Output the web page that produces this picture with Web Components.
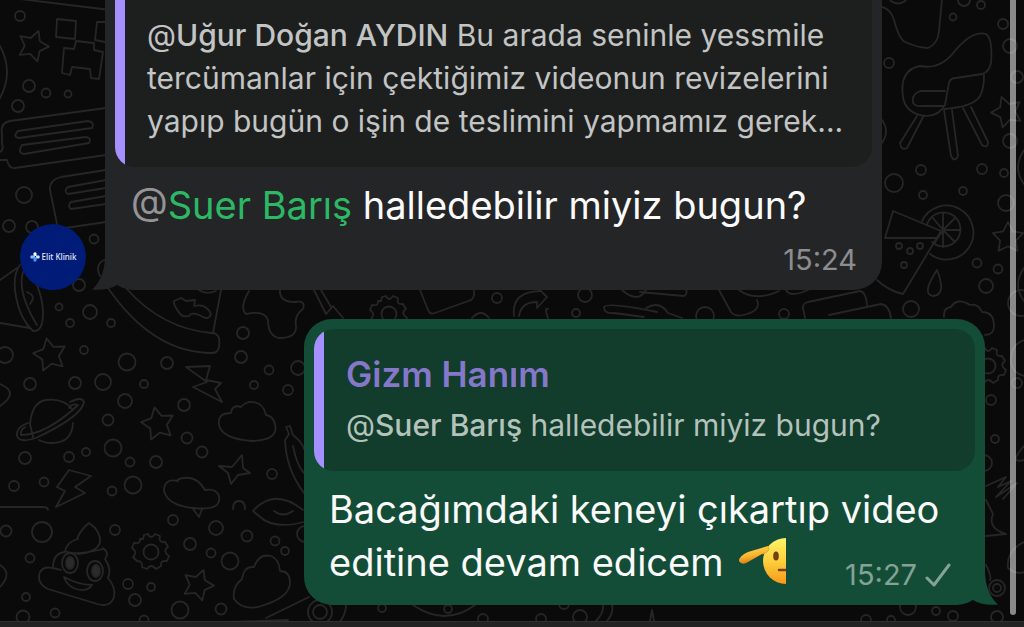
<!DOCTYPE html>
<html lang="tr">
<head>
<meta charset="utf-8">
<title>Sohbet</title>
<style>
html,body{margin:0;height:100%;overflow:hidden;background:#0a0a0a}
body{font-family:Inter,"Noto Sans",sans-serif;color:#fafafa}
</style>
</head>
<body>
<chat-view>
  <chat-message side="in">
    <chat-avatar slot="avatar"></chat-avatar>
    <chat-quote slot="quote">@<b>Uğur Doğan AYDIN</b> Bu arada seninle yessmile<br>tercümanlar için çektiğimiz videonun revizelerini<br>yapıp bugün o işin de teslimini yapmamız gerek...</chat-quote>
    <chat-mention>Suer Barış</chat-mention> halledebilir miyiz bugun?
    <time slot="time">15:24</time>
  </chat-message>
  <chat-message side="out">
    <chat-quote slot="quote" author="Gizm Hanım">@<b>Suer Barış</b> halledebilir miyiz bugun?</chat-quote>
    Bacağımdaki keneyi çıkartıp video<br>editine devam edicem <salute-face></salute-face>
    <time slot="time">15:27</time>
    <sent-check slot="time"></sent-check>
  </chat-message>
</chat-view>
<script>
class Base extends HTMLElement{
  constructor(){super();this.attachShadow({mode:'open'});}
  connectedCallback(){this.shadowRoot.innerHTML=this.render();}
}

/* x, y, radius of the bubbles scattered over the wallpaper */
const DOTS=[[20,16,5],[29,86,6],[46,93,4.5],[68,94,3.5],[18,106,6],[24,195,8],[9,226,6],[32,227,6],[94,239,4.5],[79,285,6],[59,307,3.5],[90,312,7],[70,323,4],[111,323,4],[5,355,8],[84,350,4],[127,362,8.5],[167,363,6],[30,384,6],[75,383,6],[103,382,8],[144,384,4],[125,401,7],[184,405,6],[108,420,5.5],[243,333,6],[241,357,6],[269,370,4.5],[298,368,7],[254,385,4],[288,390,5],
[187,438,5.5],[113,448,8.5],[25,458,6],[69,457,5],[86,452,4],[130,462,4.5],[156,462,6],[202,452,5.5],[14,486,5],[44,482,4.5],[112,491,4.5],[133,485,8.5],[272,474,5],[6,531,5.5],[42,532,10],[115,530,5],[173,520,5],[216,528,7],[190,544,6],[247,536,5.5],[211,553,4.5],[230,561,8.5],[275,541,4.5],[285,551,4],[30,558,4.5],[128,584,5],[151,587,4],[135,600,6],[26,597,4],[55,613,4.5],[23,617,6.5],[180,610,8.5],[221,609,5.5],[144,620,4.5],[305,534,8],
[497,298,5],[585,295,7],[576,313,4],[964,0,6],[981,5,4],[953,17,3.5],[1003,24,5],[1010,46,7],[889,63,5],[1017,77,6],[1010,141,7],[921,170,5],[894,183,9],[982,169,5],[1004,173,4],[923,195,4],[963,191,4],[1006,203,8],[977,263,4.5],[998,269,4.5],[986,286,7],[911,309,8],[784,314,5],[705,316,9],[899,246,3],[910,251,3],[920,246,3],[904,265,3],
[991,400,5],[995,439,4],[984,463,8],[1017,383,5],
[382,608,4],[448,609,4],[483,619,5],[541,619,5],[580,617,7],[564,604,5],[866,620,5],[891,620,4],[908,607,8],[936,611,4],[953,616,5],[997,617,6]];
const STARS=[[33,46,16,20],[50,355,17,-12],[158,424,17,-12],[198,585,16,20],[1007,112,16,-20],[1008,238,16,0]];
const star=([x,y,r,a])=>{let p=[];for(let i=0;i<10;i++){const q=i%2?r*.52:r,t=(a+i*36-90)*Math.PI/180;p.push((x+q*Math.cos(t)).toFixed(1)+' '+(y+q*Math.sin(t)).toFixed(1));}return `M${p.join('L')}Z`;};

class ChatWallpaper extends Base{render(){return `<style>:host{display:block}svg{display:block;width:100%;height:100%}</style>
<svg viewBox="0 0 1024 627" preserveAspectRatio="xMinYMin slice" aria-hidden="true" fill="none" stroke="#262627" stroke-width="1.8" stroke-linejoin="round" stroke-linecap="round">
${DOTS.map(([x,y,r])=>`<circle cx="${x}" cy="${y}" r="${r}"/>`).join('')}
<path d="${STARS.map(star).join('')}"/>
<path d="M20 -1L110 10M0 46Q14 72 0 98"/>
<path d="M57 19l19 2-1 18-19-2zM97 22h12M97 22l-2 18 10 2M76 41l17 2M76 41l-2 8-10-1-2 25 8 2 2-8 18 2 1 9 8 1 4-27-9-2V43"/>
<path d="M106 108L10 121Q0 123 2 134V143Q4 150 0 152M0 160h7q2 9 8 8l91-13M18 131l70-10q7 1 4 7l-73 10q-7-1-1-7zM22 145l64-8q6 1 3 6l-65 11q-7-1-2-9z"/>
<path d="M106 170l-45 7q-12 3-11 13l7 34q2 6 8 4l41-6M106 180l-38 7q-5 4 0 7l38-6M106 196l-35 6q-4 4 0 7l35-5"/>
<path d="M0 280l17-12M0 323l30 5M20 265q-8 10-4 32t17 34q10 1 10-18t-14-45M23 272q-6 20 14 53M27 292q10 4 3 12"/>
<path d="M100 276q-6-12 6-17M108 288q45 65 104 65 9 0 7-15-2-5-7-5-50-4-86-45M221 290l-8 43M199 290q7 5 17 1M174 301l7-3 5 3 9-1-1 6q12-3 17 8-2 6-8 3-11-6-14-1-7 2-11-5-5-7-4-10z"/>
<path d="M249 291q-10 17-3 23 19-4 22 6 0 16 11 18 18 0 17-12-2-11 7-17 3-9-8-7-16 0-15-12"/>
<path d="M186 367l24-1-4 14 15 3-6 6 7 13-29-15 14-5z"/>
<path d="M33 437l-3-13Q32 402 46 400q18-2 27 10M73 423q-1 20-21 20-8 0-13-3M70 402q12-6 14 0-2 14-46 35-18 7-21-1-1-9 11-13M25 427q-5 3-4 8 25 0 57-30-6-2-9 3"/>
<path d="M231 413q-14 0-12 12 3 14 34 16 26-1 22-17-2-8-9-9-3-14-17-13-6 2-8 5-9-3-10 6z"/>
<path d="M69 470l22 6-16 11 10 6-29 14 9-16-8-4zM0 507h43q5 0 5 3"/>
<path d="M242 455l1 13 7 5-12 2-7 9-3-11-9-7 13 1z"/>
<path d="M178 481q-14-3-14 10 4 15 30 17 28 3 25-12-3-8-14-6-8-14-21-12-8 1-6 3zM193 509l6 8 3-8M233 509q0-8 6-8t6 8"/>
<path d="M304 493q-18-24-19-53l4-6-3-7 4-1 3 9q9 7 11 14M293 446q4 20 11 27M253 511q21-24 50-1M253 511l6 5q14 14 45 6M274 511q9 7 19 0"/>
<path d="M77 539q4-10 12-16 12 8 11 19-2 10-22 12M78 539q-12 3-13 13-12 1-12 16M103 548q7 5 2 11 7 10 3 19 8 9 6 19-4 12-20 6L48 589q-12-6-8-17 4-6 12-4 6 1 9 2M65 551q10 5 38-2M64 577q15 8 28 8-4 7-16 4-9-3-12-12z"/>
<ellipse cx="70" cy="563" rx="8" ry="10"/><ellipse cx="95" cy="571" rx="8" ry="10"/><g fill="#2b2b2c"><ellipse cx="70" cy="563" rx="4" ry="6"/><ellipse cx="96" cy="571" rx="4" ry="6"/></g>
<g id="gear"><circle cx="151" cy="552" r="7.500"/><path d="M143 539l1-4 4-1q3 6 7 0l5 2q-2 7 5 6l3 5q-6 4 1 9l-2 5q-7-1-6 5l-5 3q-5-6-9 0l-5-2q1-6-5-6l-4-4q5-5-1-9l2-5q7 1 6-4z"/></g>
<use href="#gear" x="238" y="-238"/><use href="#gear" x="837" y="-186"/>
<path d="M242 579q2-13 12-12 5-14 17-11 8 3 9 15 10 0 10 12 0 15-32 24-16 3-24-8-2-12 8-20zM228 622l60-2M266 618l43-21M0 565q13 8 0 22M0 384q20 8 0 22"/>
<path d="M314 290l12 24 7-8 10 12M321 290l10 17M420 290l8 20q2 5 7 3l36-13q4-3 3-10M514 316q-3-24 26-25l-3-4 10 10-10 11v-6q-16 0-18 14M548 309q-4-2 0 9M622 290q16 14 24 0M604 307q4-5 53 5M604 307q0 7 10 6l30 4M472 318q9-10 17 0M640 292l44 4q4-2 2-6M646 308q14-8 22 5l14 5"/>
<path d="M719 290l12 22q5 6 16 2 14-4 10-14M739 290q16 12 40 1M786 290q4 8 22 0M805 318l-2-10q-1-4 5-6l52-11q6 1 7 14M829 315l52-11q8 1 10 14M944 317q-1-9 7-10 6-10 19-2 8-2 12 7 12 0 12 14 0 9-9 9"/>
<path d="M882 7q9 2 12 13 5 19 11 22 14 6 23 6 10-4 11-17l3-32M890 0q8 7 16 0"/>
<path d="M920 66q20 4 34-14 18-22 32-18 7 5 5 29-2 9-9 11l-26 4q-6 0-7 5l-4 22q-8 14-25 10-15-4-17-18-4-27 17-31zM984 75q0 21-9 26-8 6-30 8M945 91h-25q-9 4-7 12 3 4 9 3h22M917 116l-17 27q1 8 7 5l16-31M944 110l7 46q4 7 7 0l-6-46M963 108l19 37q6 4 6-3l-17-35M882 120q8 11 0 23"/>
<path d="M885 238l8-27 48 20-38 63q-14-3-26-14M885 238h52"/><path d="M922 221a27 27 0 1 1 8 33"/><path d="M927 225a17 17 0 1 1 5 17M943 213v34M943 230h17M943 230l12-12M943 230l12 12M943 230l-11-13M943 230l-9 14"/>
<path d="M937 270q-16 24-4 26 14-1 4-26zM1024 150q-12 18 0 34M1024 268q-12 17 0 33"/>
<path d="M986 486l20-9-8 10 13-6-15 16 21-14-14 16M986 500l7 14q-6 14 13 20l-20 2M1024 542q-18 9-16 26 8 7 16 4M986 565q6 12 4 15M1024 340q-12 4-13 18t13 18M1024 446q-16 18 0 14"/>
<circle cx="320" cy="612" r="12"/><circle cx="320" cy="612" r="7"/><path d="M346 605q0 8-6 17M382 604M413 605q32 22 62 0M603 605q1 8-7 16M612 605q2 8-5 16M650 621l2-11 2 11"/><circle cx="997" cy="588" r="8"/><circle cx="997" cy="588" r="4"/><circle cx="1021" cy="303" r="13"/>
</svg>`}}

class ChatView extends Base{render(){return `<style>
:host{display:flex;flex-direction:column;height:100vh;position:relative;overflow:hidden;isolation:isolate}
chat-wallpaper{position:absolute;inset:0;z-index:-1}
main{flex:1;min-height:0;display:flex;flex-direction:column;justify-content:flex-end;gap:29px;padding:0 39px 16px 20px}
footer{height:5px;flex:none;background:#232324;border-top:1px solid #303031}
.bar{position:absolute;right:8px;top:-8px;bottom:12px;width:6px;border-radius:3px;background:rgba(255,255,255,.52)}
</style><chat-wallpaper></chat-wallpaper><main><slot></slot></main><footer></footer><div class="bar"></div>`}}

class ChatMessage extends Base{render(){return `<style>
:host{display:flex;align-items:flex-end;flex:none}
:host([side=in]){margin-right:103px;gap:19px;--bubble:#242527;--quote:#1d1f1e;--meta:#8d8d90}
:host([side=out]){margin-left:284px;--bubble:#144d37;--quote:#123c2b;--meta:#82a395}
article{position:relative;flex:1;min-width:0;box-sizing:border-box;background:var(--bubble);border-radius:28px;padding:10px 10px 12px}
.text{margin:0;padding:12px 16px 0;font-size:38px;line-height:53px;white-space:nowrap}
.meta{display:flex;justify-content:flex-end;align-items:center;gap:8px;font-size:29px;line-height:36px;color:var(--meta);padding-right:15px}
:host([side=in]) .meta{margin-top:10px}
:host([side=out]) .meta{margin-top:-32px;padding-right:24px}
:host([side=out]) .text{padding-left:15px}
.tail{position:absolute;bottom:0;width:36px;height:40px;fill:var(--bubble)}
:host([side=in]) .tail{left:-13px}
:host([side=out]) .tail{right:-13px;transform:scaleX(-1)}
</style><slot name="avatar"></slot><article><slot name="quote"></slot><p class="text"><slot></slot></p><div class="meta"><slot name="time"></slot></div>
<svg class="tail" viewBox="0 0 36 40" aria-hidden="true"><path d="M13 0V8Q12 29 0 39.500Q16 41 25 35L36 30V0Z"/></svg></article>`}}

class ChatQuote extends Base{render(){const a=this.getAttribute('author');return `<style>
:host{display:block;box-sizing:border-box;background:linear-gradient(90deg,#a68fff 10px,var(--quote) 10px);border-radius:20px;padding:60px 12px 24px 32px;font-size:30px;line-height:43px;color:#c3c4c4;white-space:nowrap;overflow:hidden}
:host([author]){color:#b4c2bc;padding-top:22px}
h2{margin:0 0 7px;font-size:35px;line-height:46px;font-weight:600;color:#8577c9}
::slotted(b){font-weight:500}
</style>${a?`<h2>${a}</h2>`:''}<slot></slot>`}}

class ChatMention extends Base{render(){return `<style>:host{display:inline}span{color:#949496}a{color:#2cb865;text-decoration:none}</style><span>@</span><a href="#suer"><slot></slot></a>`}}

class ChatAvatar extends Base{render(){return `<style>
:host{display:flex;align-items:center;justify-content:center;gap:2px;flex:none;width:66px;height:66px;border-radius:50%;background:#001c78;color:#e4e9f8;font:500 8px/12px "Noto Sans",sans-serif}
svg{width:10px;height:10px}
</style><svg viewBox="0 0 10 10" aria-hidden="true"><path d="M3.500 1Q5-.5 6.500 1V4H3.500z" fill="#fff"/><path d="M6 3.500H9Q10.500 5 9 6.500H6z" fill="#dbe7ff"/><path d="M1 3.500H5V6.500H1Q-.5 5 1 3.500z" fill="#8cbcff"/><path d="M3.500 5H6.500V9Q5 10.500 3.500 9z" fill="#4c94ef"/></svg><span>Elit Klinik</span>`}}

class SaluteFace extends Base{render(){return `<style>:host{display:inline-block;margin-left:4px;vertical-align:-8px}svg{display:block;width:48px;height:46px}</style>
<svg viewBox="0 0 48 46" role="img" aria-label="Selam veren yüz"><defs><linearGradient id="f" x1="0" y1="0" x2="0" y2="1"><stop offset="0" stop-color="#fff36a"/><stop offset=".5" stop-color="#fdd03d"/><stop offset="1" stop-color="#f79818"/></linearGradient><linearGradient id="h" x1="0" y1="0" x2=".3" y2="1"><stop offset="0" stop-color="#ffe25a"/><stop offset=".6" stop-color="#f9b52d"/><stop offset="1" stop-color="#dc7a12"/></linearGradient></defs>
<path d="M48 0A23 23 0 0 0 48 46z" fill="url(#f)"/><path d="M30 8L10 14Q1 18 1 23q3 5 9 1l14-8 5-2q4-4 1-6z" fill="url(#h)"/><path d="M24 16l5-2q3-2 1-5" fill="none" stroke="#eba52c" stroke-width="1"/><ellipse cx="38" cy="18" rx="2.800" ry="4.500" fill="#744013"/><path d="M41 32h7" stroke="#744013" stroke-width="2.500" stroke-linecap="round"/></svg>`}}

class SentCheck extends Base{render(){return `<style>:host{display:block}svg{display:block;width:26px;height:24px}</style><svg viewBox="0 0 26 24" role="img" aria-label="Gönderildi"><path d="M2 15l7 7L24 2" fill="none" stroke="#82a395" stroke-width="3" stroke-linecap="round" stroke-linejoin="round"/></svg>`}}

for(const [n,c] of Object.entries({'chat-wallpaper':ChatWallpaper,'chat-view':ChatView,'chat-message':ChatMessage,'chat-quote':ChatQuote,'chat-mention':ChatMention,'chat-avatar':ChatAvatar,'salute-face':SaluteFace,'sent-check':SentCheck}))customElements.define(n,c);
</script>
</body>
</html>
